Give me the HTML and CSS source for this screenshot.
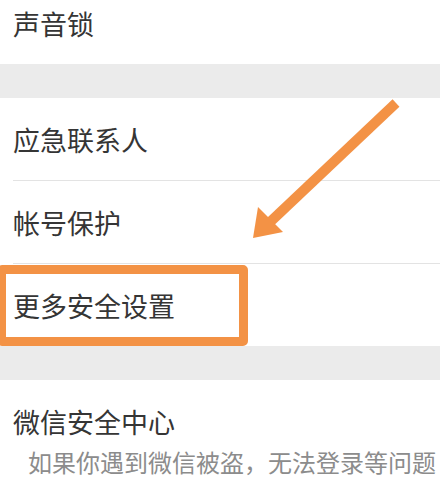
FILE: index.html
```html
<!DOCTYPE html>
<html lang="zh-CN">
<head>
  <meta charset="UTF-8" />
  <meta name="viewport" content="width=device-width, initial-scale=1" />
  <title>帐号与安全</title>
  <link rel="stylesheet" href="styles.css">
</head>
<body>

  <div class="page">
    <div class="group first">
      <div class="item">声音锁</div>
    </div>

    <div class="group">
      <div class="item">应急联系人</div>
      <div class="item">帐号保护</div>
      <div class="item marked">
        更多安全设置
        <span class="mark-box"></span>
      </div>
    </div>

    <div class="group">
      <div class="center">
        <div class="center-title">微信安全中心</div>
        <div class="center-desc">如果你遇到微信被盗，无法登录等问题</div>
      </div>
    </div>

    <svg class="arrow" width="440" height="481" viewBox="0 0 440 481">
      <line x1="396" y1="103" x2="268" y2="224" stroke="#f39245" stroke-width="10" />
      <polygon points="253,238 258,207 283,232" fill="#f39245" />
    </svg>
  </div>

</body>
</html>
```

FILE: styles.css
```css
body {
  margin: 0;
  padding: 0;
  background-color: #ebebeb;
  font-family: 'Noto Sans CJK SC', 'Noto Sans', sans-serif;
  color: #353535;
  overflow: hidden;
}

.page {
  position: relative;
  width: 440px;
  height: 481px;
  overflow: hidden;
}

.group {
  background-color: #ffffff;
  margin-bottom: 34px;
}

.group.first {
  margin-top: -18px;
}

.item {
  position: relative;
  height: 82px;
  margin-left: 13px;
  display: flex;
  align-items: center;
  font-size: 27px;
  border-bottom: 1px solid #e3e3e3;
}

.item:last-child {
  border-bottom: none;
}

.mark-box {
  position: absolute;
  left: -16px;
  top: 1px;
  width: 233px;
  height: 63px;
  border: 9px solid #f39245;
  border-radius: 5px;
}

.center {
  padding: 22px 0 14px 13px;
}

.center-title {
  font-size: 27px;
  line-height: 40px;
}

.center-desc {
  margin-left: 15px;
  margin-top: 4px;
  font-size: 24px;
  line-height: 32px;
  color: #8c8c8c;
  white-space: nowrap;
}

.arrow {
  position: absolute;
  left: 0;
  top: 0;
}
```
